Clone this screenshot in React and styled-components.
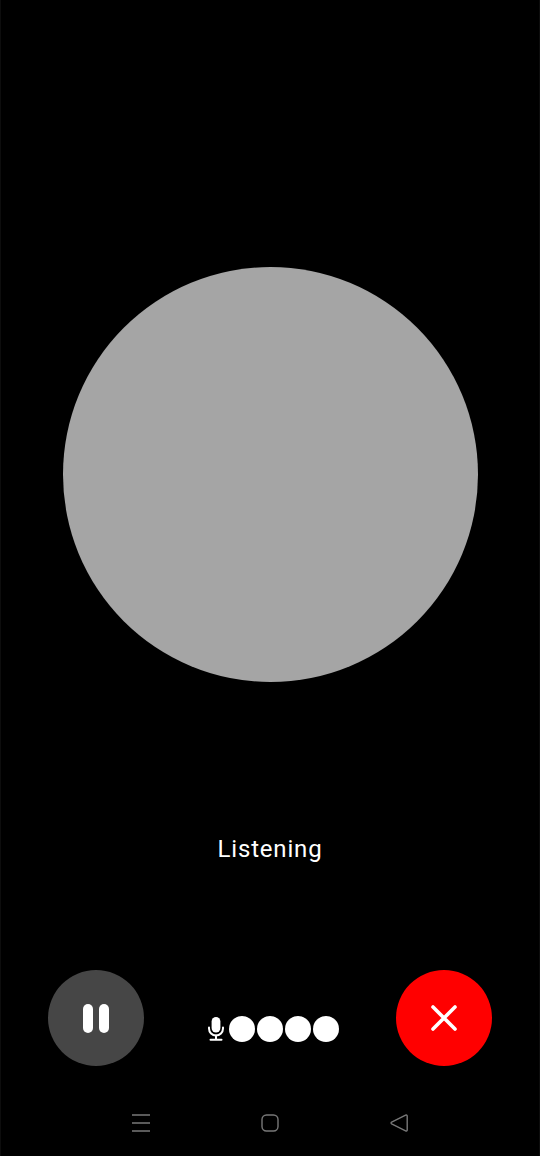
import React from 'react';
import styled, { createGlobalStyle } from 'styled-components';

const GlobalStyle = createGlobalStyle`
    html, body {
        margin: 0;
        padding: 0;
        background: #000;
    }
`;

const Screen = styled.div`
    width: 540px;
    height: 1156px;
    box-sizing: border-box;
    padding-top: 267px;
    overflow: hidden;
    background: #000;
    font-family: Roboto, "Liberation Sans", sans-serif;
    display: flex;
    flex-direction: column;
    border-left: 1px solid #0d0d0d;
    border-right: 1px solid #0d0d0d;
`;

const Orb = styled.div`
    width: 415px;
    height: 415px;
    border-radius: 50%;
    background: #a5a5a5;
    align-self: center;
`;

const Status = styled.div`
    margin-top: 153px;
    height: 28px;
    line-height: 28px;
    text-align: center;
    color: #fff;
    font-size: 24px;
    letter-spacing: 0.82px;
`;

const Controls = styled.div`
    margin-top: 107px;
    padding: 0 47px;
    display: flex;
    align-items: flex-start;
`;

const RoundButton = styled.button`
    width: 96px;
    height: 96px;
    padding: 0;
    border: none;
    border-radius: 50%;
    background: ${({ $bg }) => $bg};
    display: flex;
    align-items: center;
    justify-content: center;
    flex-shrink: 0;
    &:last-child {
        margin-left: auto;
    }
`;

const PauseBars = styled.div`
    display: flex;
    gap: 6px;
`;

const PauseBar = styled.span`
    width: 10px;
    height: 29px;
    border-radius: 5px;
    background: #fff;
`;

const VoiceLevel = styled.div`
    margin: 46px 0 0 64px;
    display: flex;
    align-items: center;
    gap: 2px;
`;

const MicIcon = styled.svg`
    width: 16px;
    height: 24px;
    margin-right: 3px;
`;

const Dot = styled.span`
    width: 26px;
    height: 26px;
    border-radius: 50%;
    background: #fff;
`;

const NavBar = styled.div`
    margin-top: 48px;
    padding: 0 131px;
    display: flex;
    justify-content: space-between;
`;

const NavIcon = styled.svg`
    width: 18px;
    height: 18px;
    fill: none;
    stroke: #787878;
    stroke-width: 1.4;
`;

export default function App() {
    return (
        <>
            <GlobalStyle />
            <Screen>
                <Orb />
                <Status>Listening</Status>
                <Controls>
                    <RoundButton $bg="#464646">
                        <PauseBars>
                            <PauseBar />
                            <PauseBar />
                        </PauseBars>
                    </RoundButton>
                    <VoiceLevel>
                        <MicIcon viewBox="0 0 16 24">
                            <rect x="3.6" y="0" width="8.8" height="15.5" rx="4.4" fill="#fff" />
                            <path d="M1 10.5v1a7 7 0 0 0 14 0v-1" fill="none" stroke="#fff" strokeWidth="2" strokeLinecap="round" />
                            <path d="M8 18.5V22.5M2.5 22.8h11" fill="none" stroke="#fff" strokeWidth="2" strokeLinecap="round" />
                        </MicIcon>
                        <Dot />
                        <Dot />
                        <Dot />
                        <Dot />
                    </VoiceLevel>
                    <RoundButton $bg="#ff0000">
                        <svg width="28" height="28" viewBox="0 0 28 28">
                            <path d="M3 3l22 22M25 3L3 25" stroke="#fff" strokeWidth="3.6" strokeLinecap="round" />
                        </svg>
                    </RoundButton>
                </Controls>
                <NavBar>
                    <NavIcon viewBox="0 0 18 18">
                        <path d="M0 1h18M0 9h18M0 17h18" />
                    </NavIcon>
                    <NavIcon viewBox="0 0 18 18">
                        <rect x="1" y="1" width="16" height="16" rx="4.5" />
                    </NavIcon>
                    <NavIcon viewBox="0 0 18 18">
                        <path d="M1.6 8.2 15.6 1.1c.8-.4 1.6.1 1.6 1v13.8c0 .9-.8 1.4-1.6 1L1.6 9.8c-.7-.4-.7-1.2 0-1.6z" />
                    </NavIcon>
                </NavBar>
            </Screen>
        </>
    );
}
